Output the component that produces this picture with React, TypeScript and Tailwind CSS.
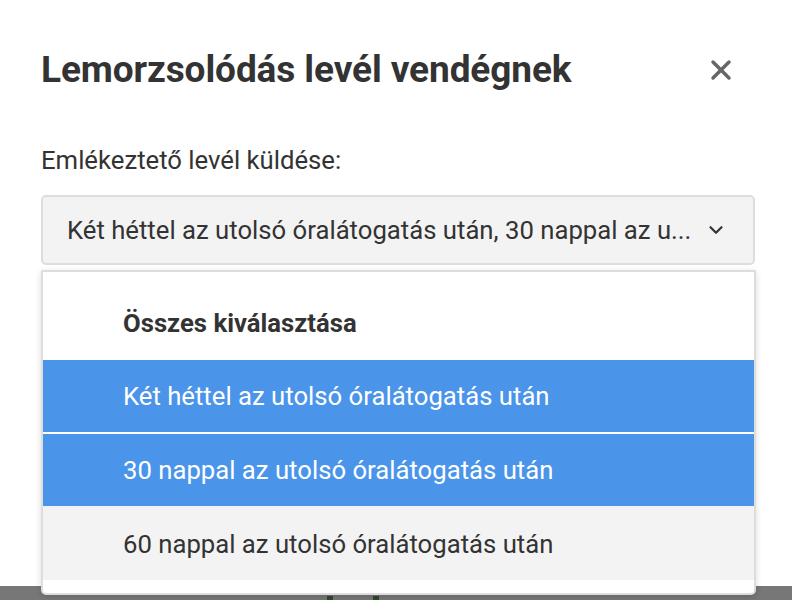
import { X, ChevronDown } from "lucide-react";

const options = [
  { label: "Két héttel az utolsó óralátogatás után", selected: true },
  { label: "30 nappal az utolsó óralátogatás után", selected: true },
  { label: "60 nappal az utolsó óralátogatás után", selected: false },
];

export default function App() {
  return (
    <div
      className="relative h-[600px] w-[792px] overflow-hidden bg-[#777777]"
      style={{ fontFamily: "Roboto, 'Liberation Sans', sans-serif" }}
    >
      {/* modal */}
      <div className="h-[586px] bg-white pl-[41px] pr-[37px] pt-[48px]">
        <div className="flex items-center justify-between">
          <h2 className="text-[37px] font-bold leading-[44px] tracking-[-0.1px] text-[#333333]">
            Lemorzsolódás levél vendégnek
          </h2>
          <button className="mr-[18px] text-[#666666]">
            <X size={32} strokeWidth={2.6} />
          </button>
        </div>
        <p className="mt-[53px] text-[25.7px] leading-[30px] text-[#333333]">Emlékeztető levél küldése:</p>
        <div className="mt-[20px] flex h-[70px] w-[714px] items-center justify-between rounded-[5px] border-2 border-[#dddddd] bg-[#f3f3f3] pl-[24px] pr-[26px]">
          <span className="truncate text-[25.7px] text-[#333333]">
            Két héttel az utolsó óralátogatás után, 30 nappal az u...
          </span>
          <ChevronDown size={22} strokeWidth={2.4} className="shrink-0 text-[#333333]" />
        </div>
      </div>

      {/* green bits under overlay */}
      <div className="flex h-[14px] items-end gap-[40px] pl-[327px]">
        <div className="h-[4px] w-[6px] bg-[#2f4a2a]" />
        <div className="h-[4px] w-[6px] bg-[#2f4a2a]" />
      </div>

      {/* dropdown menu */}
      <div className="absolute left-[41px] top-[270px] w-[715px] rounded-b-[5px] border-2 border-[#dddddd] bg-white pb-[13px] pt-[14px] shadow-[0_2px_6px_rgba(0,0,0,0.15)]">
        <div className="flex h-[74px] items-center pl-[80px] text-[25.7px] font-bold text-[#333333]">
          Összes kiválasztása
        </div>
        {options.map((o, i) => (
          <div
            key={o.label}
            className={
              "flex items-center pl-[80px] text-[25.7px] " +
              (o.selected ? "h-[72px] bg-[#4a94ea] text-white " : "h-[74px] bg-[#f3f3f3] pt-[2px] text-[#333333] ") +
              (i === 1 ? "mt-[2px]" : "")
            }
          >
            {o.label}
          </div>
        ))}
      </div>
    </div>
  );
}
